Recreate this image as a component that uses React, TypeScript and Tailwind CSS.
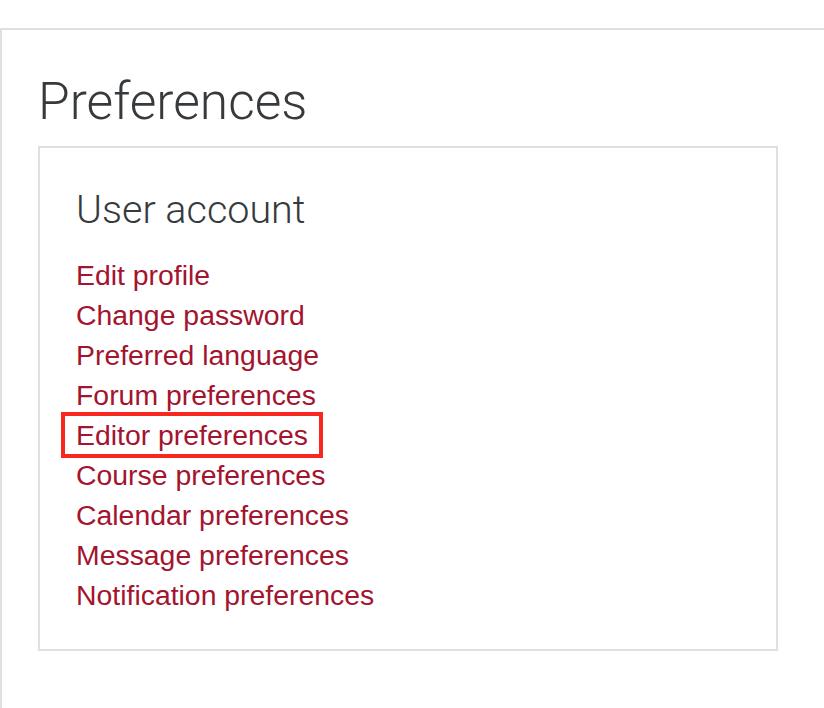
import React from "react";

const links = [
  "Edit profile",
  "Change password",
  "Preferred language",
  "Forum preferences",
  "Editor preferences",
  "Course preferences",
  "Calendar preferences",
  "Message preferences",
  "Notification preferences",
];

export default function App() {
  return (
    <div className="w-[824px] h-[708px] overflow-hidden bg-white pt-[28px] font-['Liberation_Sans',Arial,sans-serif]">
      <div className="h-[700px] border-t-2 border-l-2 border-[#e0e0e0] pt-[42px] pl-[36px]">
        <h2 className="font-['Roboto',sans-serif] font-light text-[51.5px] leading-[60px] text-[#373a3c]">
          Preferences
        </h2>
        <div className="mt-[14px] w-[740px] h-[505px] border-2 border-[#e0e0e0] pt-[39px] pl-[36px]">
          <h3 className="font-['Roboto',sans-serif] font-light text-[39.5px] leading-[46px] text-[#373a3c]">
            User account
          </h3>
          <ul className="mt-[22px] flex flex-col">
            {links.map((l) => (
              <li key={l} className="relative h-[40px] text-[28.4px] leading-[40px] text-[#a3142f]">
                <a href="#" className="text-[#a3142f]">{l}</a>
                {l === "Editor preferences" && (
                  <div className="absolute left-[-15px] top-[-3px] w-[262px] h-[46px] border-4 border-[#f8271f] pointer-events-none" />
                )}
              </li>
            ))}
          </ul>
        </div>
      </div>
    </div>
  );
}
